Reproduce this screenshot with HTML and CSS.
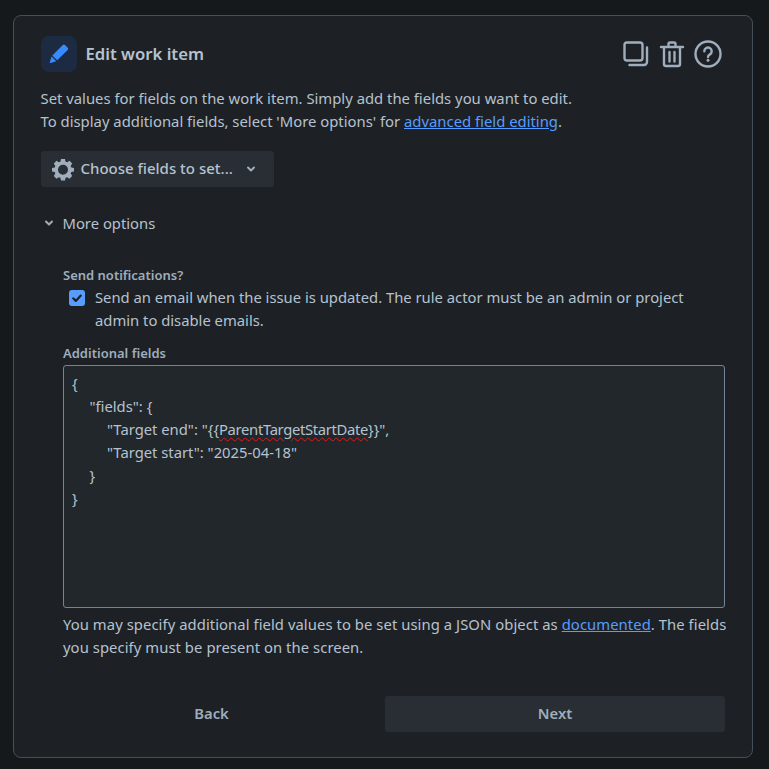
FILE: index.html
```html
<!DOCTYPE html>
<html lang="en">
<head>
<meta charset="utf-8">
<title>Edit work item</title>
<link rel="stylesheet" href="styles.css">
</head>
<body>
<main class="card">
  <header class="head">
    <span class="badge">
      <svg width="22" height="22" viewBox="0 0 22 22"><path d="M15.2 1.9a1.6 1.6 0 0 1 2.2 0l2.7 2.6a1.6 1.6 0 0 1 0 2.2L9.6 17.1 4.7 12.3z" fill="#388bff" transform="translate(-.4 .2)"/><path d="M3.6 13.6 8.3 18.300 2.600 20a.6.6 0 0 1-.8-.8z" fill="#388bff"/></svg>
    </span>
    <h1 class="title">Edit work item</h1>
    <div class="tools">
      <svg width="28" height="28" viewBox="0 0 28 28" fill="none" stroke="#9fadbc" stroke-width="2.400"><rect x="2.500" y="2.500" width="18" height="18" rx="2.500"/><path d="M25 7.500V22a3 3 0 0 1-3 3H7.500" stroke-linecap="round"/></svg>
      <svg width="26" height="28" viewBox="0 0 26 28" fill="none" stroke="#9fadbc" stroke-width="2.400"><path d="M2 7h22M9.500 6.500V4a1.500 1.500 0 0 1 1.500-1.500h4A1.500 1.500 0 0 1 16.500 4v2.500M5 7v17a2 2 0 0 0 2 2h12a2 2 0 0 0 2-2V7M10.500 12v9.500M15.500 12v9.500" stroke-linecap="round"/></svg>
      <svg width="28" height="28" viewBox="0 0 28 28" fill="none" stroke="#9fadbc" stroke-width="2.400"><circle cx="14" cy="14" r="12.500"/><path d="M10.300 11.200a3.700 3.700 0 1 1 5.600 3.200c-1.200.7-1.900 1.300-1.900 2.600" stroke-linecap="round"/><circle cx="14" cy="20.300" r="1.500" fill="#9fadbc" stroke="none"/></svg>
    </div>
  </header>

  <p class="intro">Set values for fields on the work item. Simply add the fields you want to edit.<br>To display additional fields, select 'More options' for <a href="#">advanced field editing</a>.</p>

  <button class="choose" type="button">
    <svg width="24" height="24" viewBox="0 0 24 24"><path fill="#9fadbc" fill-rule="evenodd" d="M10 2h4l.6 2.700 1.500.6 2.400-1.500 2.700 2.700-1.500 2.400.6 1.500L23 11v3.500l-2.700.6-.6 1.500 1.500 2.400-2.700 2.700-2.400-1.500-1.500.6-.6 2.700h-4l-.6-2.700-1.500-.6-2.400 1.500-2.700-2.700 1.500-2.400-.6-1.500L1 14.500V11l2.700-.6.6-1.500-1.500-2.400 2.700-2.700 2.400 1.500 1.500-.6zM12 7.700a5 5 0 1 0 0 10 5 5 0 0 0 0-10z"/></svg>
    <span>Choose fields to set...</span>
    <svg class="chev-small" width="12" height="8" viewBox="0 0 12 8" fill="none" stroke="#9fadbc" stroke-width="2" stroke-linecap="round" stroke-linejoin="round"><path d="M3 2.500l3 3 3-3"/></svg>
  </button>

  <div class="more">
    <svg width="12" height="8" viewBox="0 0 12 8" fill="none" stroke="#9fadbc" stroke-width="2" stroke-linecap="round" stroke-linejoin="round"><path d="M3 2.500l3 3 3-3"/></svg>
    <span>More options</span>
  </div>

  <section class="options">
    <div class="label">Send notifications?</div>
    <div class="check-row">
      <span class="check"><svg width="16" height="16" viewBox="0 0 16 16" fill="none" stroke="#1d2125" stroke-width="2.200" stroke-linecap="round" stroke-linejoin="round"><path d="M4.200 8.300l2.600 2.600 5-5.300"/></svg></span>
      <span class="check-text">Send an email when the issue is updated. The rule actor must be an admin or project admin to disable emails.</span>
    </div>
    <div class="label label-fields">Additional fields</div>
    <div class="code">
      <div>{</div>
      <div class="i1">"fields": {</div>
      <div class="i2">"Target end": "{{<span class="squiggle">ParentTargetStartDate</span>}}",</div>
      <div class="i2">"Target start": "2025-04-18"</div>
      <div class="i1">}</div>
      <div>}</div>
    </div>
    <p class="help">You may specify additional field values to be set using a JSON object as <a href="#">documented</a>. The fields you specify must be present on the screen.</p>
  </section>

  <footer class="actions">
    <button class="back" type="button">Back</button>
    <button class="next" type="button">Next</button>
  </footer>
</main>
</body>
</html>
```

FILE: styles.css
```css
* { box-sizing: border-box; }
html, body { margin: 0; height: 769px; overflow: hidden; }
body {
  background: #16191c;
  padding: 15px 16px 11px 13px;
  font-family: "Noto Sans", sans-serif;
  font-size: 14.800px;
  line-height: 23px;
  color: #b6c2cf;
}
.card {
  height: 743px;
  background: #1d2125;
  border: 1.500px solid #454f59;
  border-radius: 8px;
  padding: 20px 27px 0 26.500px;
}
.head { display: flex; align-items: center; height: 36px; }
.badge {
  width: 36px; height: 36px; border-radius: 8px;
  background: #1c2b41;
  display: flex; align-items: center; justify-content: center;
}
.title { margin: 0 0 2px 9px; font-size: 16.700px; font-weight: 600; color: #b6c2cf; flex: 1; }
.tools { display: flex; align-items: center; gap: 9px; margin-right: 3px; margin-bottom: 1px; }
.intro { margin: 15px 0 0; font-size: 14.850px; }
a { color: #579dff; text-decoration: underline; }
.choose {
  display: flex; align-items: center;
  margin-top: 18px; width: 233px; height: 36px; padding: 0 0 0 10px;
  background: #282e33; border: 0; border-radius: 3px;
  font: 500 15px/23px "Noto Sans", sans-serif; color: #b6c2cf;
}
.choose span { margin-left: 6px; margin-bottom: 2px; }
.chev-small { margin-left: 12px; }
.more { display: flex; align-items: center; gap: 8px; margin: 24px 0 0 2px; height: 24px; }
.options { margin: 0 0 0 22.500px; }
.label { font-size: 13px; font-weight: 600; line-height: 18px; color: #9fadbc; margin-top: 31px; }
.label-fields { margin-top: 12px; }
.check-row { display: flex; gap: 10px; margin-top: 2px; padding-left: 6px; }
.check { flex: none; width: 16px; height: 16px; margin-top: 4px; border-radius: 3px; background: #579dff; }
.check svg { display: block; }
.code {
  margin-top: 3px; height: 243px; padding: 6px 8px;
  background: #22272b; border: 1.500px solid #738496; border-radius: 3px;
}
.i1 { padding-left: 17.500px; }
.i2 { padding-left: 35px; }
.squiggle { letter-spacing: -.33px; text-decoration: underline wavy #e5161b 1px; text-underline-offset: 2px; }
.help { margin: 5px -6px 0 0; letter-spacing: .07px; }
.actions { display: flex; align-items: center; justify-content: space-between; margin-top: 37px; }
.back, .next {
  height: 36px; border: 0; border-radius: 3px; padding: 0 0 1px;
  font: 600 14.800px/23px "Noto Sans", sans-serif; color: #9fadbc;
}
.back { width: 342px; background: transparent; }
.next { width: 340px; background: #282e33; }
```
